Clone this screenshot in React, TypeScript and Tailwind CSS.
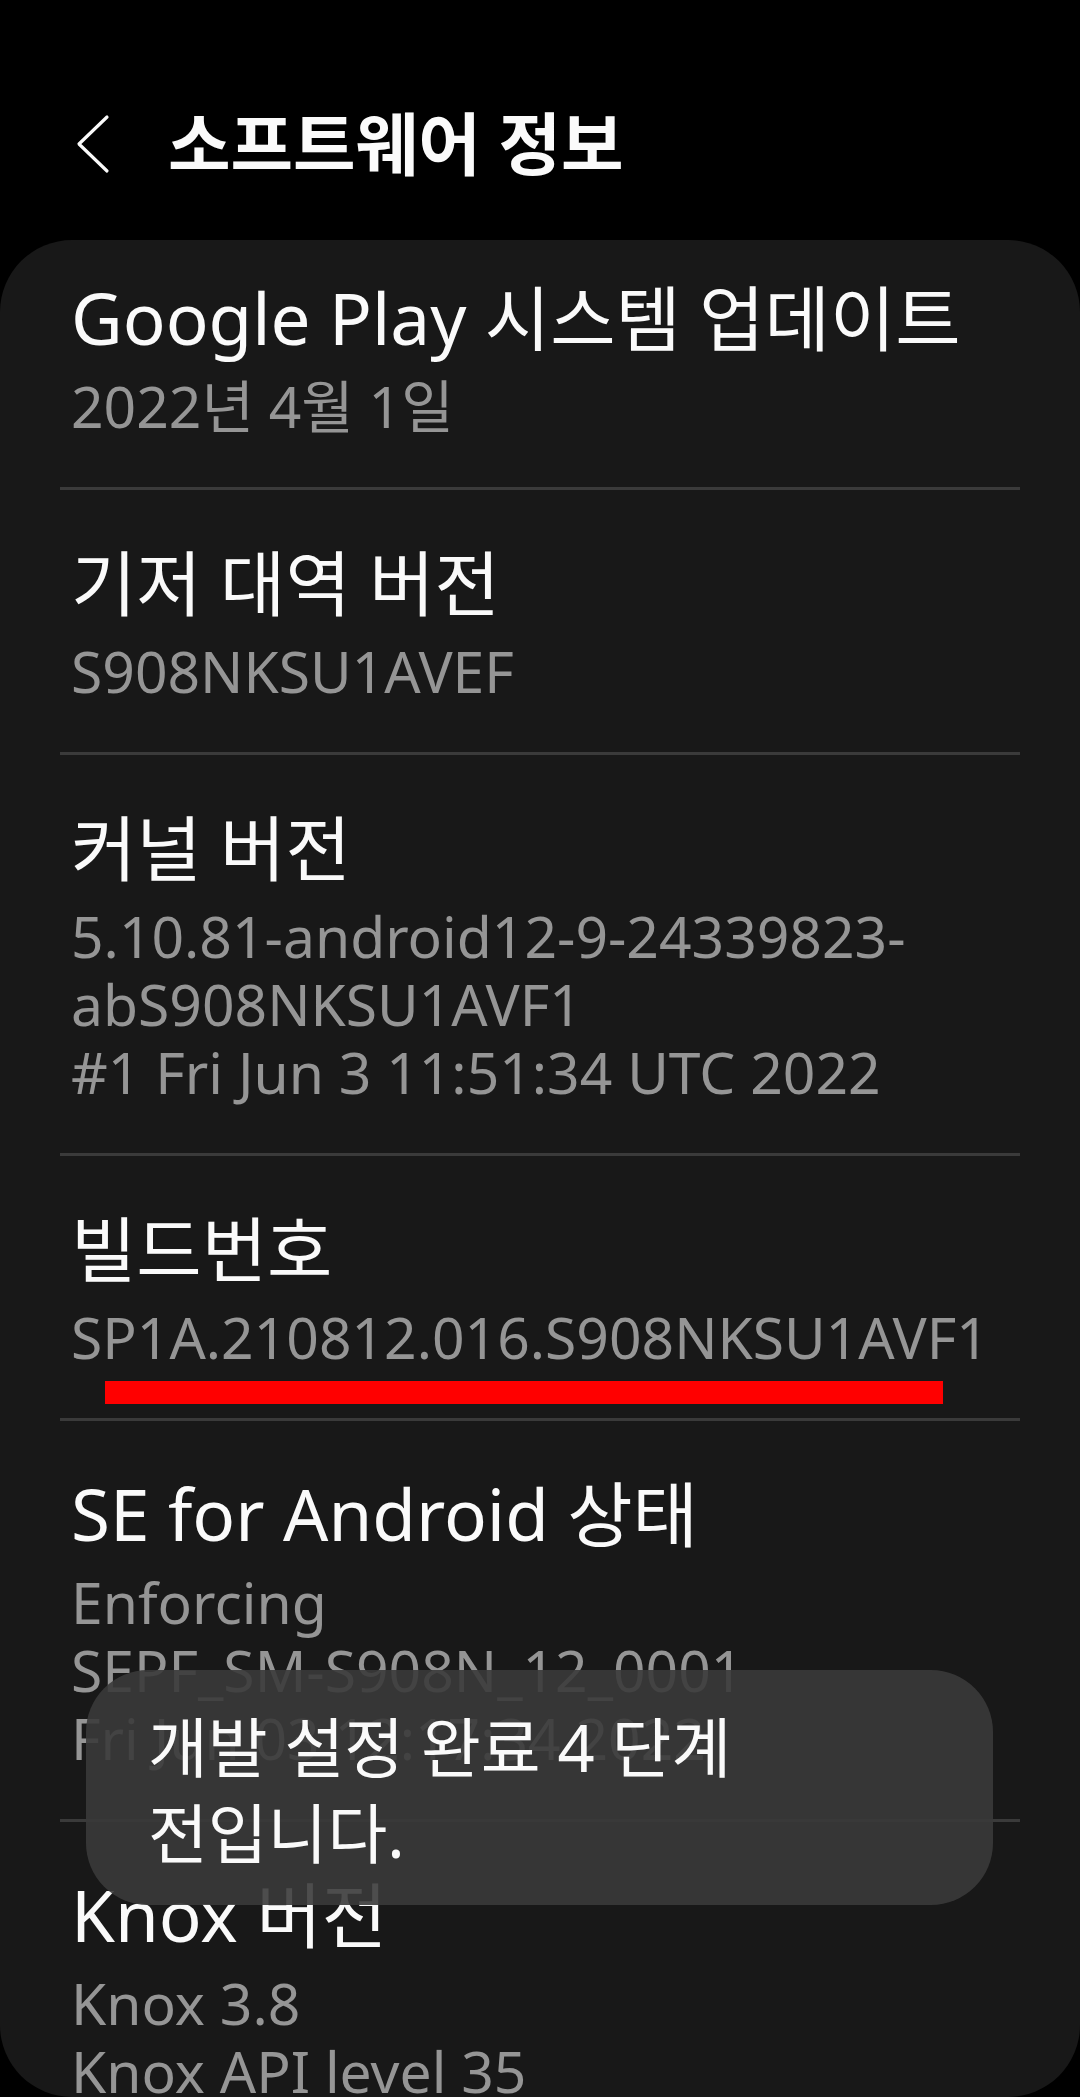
import React from 'react'

type Item = {
  title: string
  lines: string[]
  marked?: boolean
}

const items: Item[] = [
  { title: 'Google Play 시스템 업데이트', lines: ['2022년 4월 1일'] },
  { title: '기저 대역 버전', lines: ['S908NKSU1AVEF'] },
  {
    title: '커널 버전',
    lines: ['5.10.81-android12-9-24339823-', 'abS908NKSU1AVF1', '#1 Fri Jun 3 11:51:34 UTC 2022'],
  },
  { title: '빌드번호', lines: ['SP1A.210812.016.S908NKSU1AVF1'], marked: true },
  {
    title: 'SE for Android 상태',
    lines: ['Enforcing', 'SEPF_SM-S908N_12_0001', 'Fri Jun 03 12:17:34 2022'],
  },
  { title: 'Knox 버전', lines: ['Knox 3.8', 'Knox API level 35'] },
]

const InfoRow = ({ item, first }: { item: Item; first: boolean }) => {
  return (
    <div className={`relative pl-[71px] pr-[40px] ${first ? 'pt-[38px]' : 'pt-[53px]'} pb-[47px]`}>
      <div className="text-[71px] leading-[80px] text-[#fafafa] whitespace-nowrap">{item.title}</div>
      <div className="mt-[14px] text-[57px] leading-[68px] text-[#959595]">
        {item.lines.map((line) => (
          <div key={line} className="whitespace-nowrap">
            {line}
          </div>
        ))}
      </div>
      {/* red underline on the build number */}
      {item.marked && <div className="absolute left-[105px] top-[225px] w-[838px] h-[23px] bg-[#ff0000]" />}
    </div>
  )
}

export default function App() {
  return (
    <div className="relative w-[1080px] h-[2097px] overflow-hidden bg-black font-['Noto_Sans','Noto_Sans_CJK_KR',sans-serif]">
      <div className="h-[240px] flex items-start pt-[104px]">
        <svg className="ml-[74px] mt-[10px]" width="36" height="60" viewBox="0 0 36 60" fill="none">
          <path d="M33 3 L5 30 L33 57" stroke="#fafafa" strokeWidth="3.2" strokeLinecap="round" strokeLinejoin="round" />
        </svg>
        <h1 className="ml-[58px] text-[68px] leading-[80px] font-bold text-[#fafafa]">소프트웨어 정보</h1>
      </div>

      <div className="h-[1857px] rounded-[72px] bg-[#181818] overflow-hidden">
        {items.map((item, i) => (
          <div key={item.title}>
            {i > 0 && <div className="mx-[60px] h-[3px] bg-[#3a3a3a]" />}
            <InfoRow item={item} first={i === 0} />
          </div>
        ))}
      </div>

      {/* toast */}
      <div className="absolute left-[86px] top-[1670px] w-[907px] h-[235px] rounded-[62px] bg-[#3a3a3a]/90 pl-[62px] pt-[34px]">
        <div className="text-[65px] leading-[86px] text-[#fafafa]">
          개발 설정 완료 4 단계
          <br />
          전입니다.
        </div>
      </div>
    </div>
  )
}
